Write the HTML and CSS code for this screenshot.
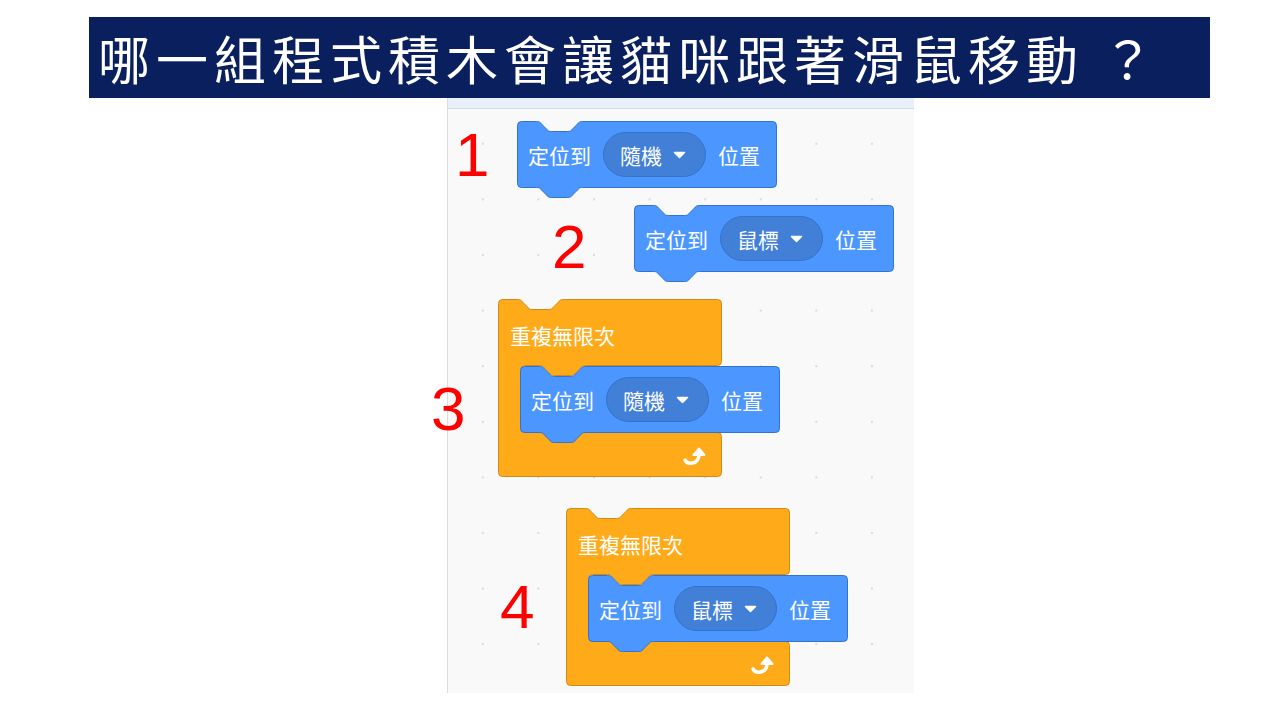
FILE: index.html
```html
<!DOCTYPE html>
<html lang="zh-Hant">

<head>
    <meta charset="UTF-8">
    <meta name="viewport" content="width=device-width, initial-scale=1.0">
    <title>哪一組程式積木會讓貓咪跟著滑鼠移動？</title>
    <link rel="stylesheet" href="styles.css">
</head>

<body>
    <header class="title">哪一組程式積木會讓貓咪跟著滑鼠移動 ？</header>

    <main class="workspace">
        <div class="tabs"></div>
        <div class="canvas">

            <!-- 1: go to random position -->
            <span class="num num-1">1</span>
            <div class="block motion pos-1">
                <svg class="shape" width="260" height="78" viewBox="0 0 260 78">
                    <path class="blue" d="M0.5,4.5 a4,4 0 0 1 4,-4 H19.5 c3,0 4,1 5,2.5 l5,5 c1,1.5 2,2.5 5,2.5 h16 c3,0 4,-1 5,-2.5 l5,-5 c1,-1.5 2,-2.5 5,-2.5 H255.5 a4,4 0 0 1 4,4 V62.5 a4,4 0 0 1 -4,4 H65.5 c-3,0 -4,1 -5,2.5 l-5,5 c-1,1.5 -2,2.5 -5,2.5 h-16 c-3,0 -4,-1 -5,-2.5 l-5,-5 c-1,-1.5 -2,-2.5 -5,-2.5 H4.5 a4,4 0 0 1 -4,-4 Z" />
                </svg>
                <div class="row">
                    <span>定位到</span>
                    <span class="dropdown">隨機
                        <svg class="caret" width="13" height="8" viewBox="0 0 13 8"><path d="M1.5,1.5 H11.5 L6.5,6.5 Z" /></svg>
                    </span>
                    <span>位置</span>
                </div>
            </div>

            <!-- 2: go to mouse pointer -->
            <span class="num num-2">2</span>
            <div class="block motion pos-2">
                <svg class="shape" width="260" height="78" viewBox="0 0 260 78">
                    <path class="blue" d="M0.5,4.5 a4,4 0 0 1 4,-4 H19.5 c3,0 4,1 5,2.5 l5,5 c1,1.5 2,2.5 5,2.5 h16 c3,0 4,-1 5,-2.5 l5,-5 c1,-1.5 2,-2.5 5,-2.5 H255.5 a4,4 0 0 1 4,4 V62.5 a4,4 0 0 1 -4,4 H65.5 c-3,0 -4,1 -5,2.5 l-5,5 c-1,1.5 -2,2.5 -5,2.5 h-16 c-3,0 -4,-1 -5,-2.5 l-5,-5 c-1,-1.5 -2,-2.5 -5,-2.5 H4.5 a4,4 0 0 1 -4,-4 Z" />
                </svg>
                <div class="row">
                    <span>定位到</span>
                    <span class="dropdown">鼠標
                        <svg class="caret" width="13" height="8" viewBox="0 0 13 8"><path d="M1.5,1.5 H11.5 L6.5,6.5 Z" /></svg>
                    </span>
                    <span>位置</span>
                </div>
            </div>

            <!-- 3: forever + random position -->
            <span class="num num-3">3</span>
            <div class="block forever pos-3">
                <svg class="shape" width="224" height="178" viewBox="0 0 224 178">
                    <path class="orange" d="M0.5,4.5 a4,4 0 0 1 4,-4 H19.5 c3,0 4,1 5,2.5 l5,5 c1,1.5 2,2.5 5,2.5 h16 c3,0 4,-1 5,-2.5 l5,-5 c1,-1.5 2,-2.5 5,-2.5 H219.5 a4,4 0 0 1 4,4 V62.5 a4,4 0 0 1 -4,4 H87.5 c-3,0 -4,1 -5,2.5 l-5,5 c-1,1.5 -2,2.5 -5,2.5 h-16 c-3,0 -4,-1 -5,-2.5 l-5,-5 c-1,-1.5 -2,-2.5 -5,-2.5 H26.5 a4,4 0 0 0 -4,4 V129.5 a4,4 0 0 0 4,4 H219.5 a4,4 0 0 1 4,4 V173.5 a4,4 0 0 1 -4,4 H4.5 a4,4 0 0 1 -4,-4 Z" />
                </svg>
                <div class="label">重複無限次</div>
                <svg class="loop" width="26" height="20" viewBox="0 0 26 20">
                    <path d="M3,14 C4,16.5 7,17.5 10.5,17 C15,16.3 17,13 17,8" />
                    <path class="head" d="M11.5,9 L17,2.5 L22.5,9 Z" />
                </svg>
                <div class="block motion inner">
                    <svg class="shape" width="260" height="78" viewBox="0 0 260 78">
                        <path class="blue" d="M0.5,4.5 a4,4 0 0 1 4,-4 H19.5 c3,0 4,1 5,2.5 l5,5 c1,1.5 2,2.5 5,2.5 h16 c3,0 4,-1 5,-2.5 l5,-5 c1,-1.5 2,-2.5 5,-2.5 H255.5 a4,4 0 0 1 4,4 V62.5 a4,4 0 0 1 -4,4 H65.5 c-3,0 -4,1 -5,2.5 l-5,5 c-1,1.5 -2,2.5 -5,2.5 h-16 c-3,0 -4,-1 -5,-2.5 l-5,-5 c-1,-1.5 -2,-2.5 -5,-2.5 H4.5 a4,4 0 0 1 -4,-4 Z" />
                    </svg>
                    <div class="row">
                        <span>定位到</span>
                        <span class="dropdown">隨機
                            <svg class="caret" width="13" height="8" viewBox="0 0 13 8"><path d="M1.5,1.5 H11.5 L6.5,6.5 Z" /></svg>
                        </span>
                        <span>位置</span>
                    </div>
                </div>
            </div>

            <!-- 4: forever + mouse pointer -->
            <span class="num num-4">4</span>
            <div class="block forever pos-4">
                <svg class="shape" width="224" height="178" viewBox="0 0 224 178">
                    <path class="orange" d="M0.5,4.5 a4,4 0 0 1 4,-4 H19.5 c3,0 4,1 5,2.5 l5,5 c1,1.5 2,2.5 5,2.5 h16 c3,0 4,-1 5,-2.5 l5,-5 c1,-1.5 2,-2.5 5,-2.5 H219.5 a4,4 0 0 1 4,4 V62.5 a4,4 0 0 1 -4,4 H87.5 c-3,0 -4,1 -5,2.5 l-5,5 c-1,1.5 -2,2.5 -5,2.5 h-16 c-3,0 -4,-1 -5,-2.5 l-5,-5 c-1,-1.5 -2,-2.5 -5,-2.5 H26.5 a4,4 0 0 0 -4,4 V129.5 a4,4 0 0 0 4,4 H219.5 a4,4 0 0 1 4,4 V173.5 a4,4 0 0 1 -4,4 H4.5 a4,4 0 0 1 -4,-4 Z" />
                </svg>
                <div class="label">重複無限次</div>
                <svg class="loop" width="26" height="20" viewBox="0 0 26 20">
                    <path d="M3,14 C4,16.5 7,17.5 10.5,17 C15,16.3 17,13 17,8" />
                    <path class="head" d="M11.5,9 L17,2.5 L22.5,9 Z" />
                </svg>
                <div class="block motion inner">
                    <svg class="shape" width="260" height="78" viewBox="0 0 260 78">
                        <path class="blue" d="M0.5,4.5 a4,4 0 0 1 4,-4 H19.5 c3,0 4,1 5,2.5 l5,5 c1,1.5 2,2.5 5,2.5 h16 c3,0 4,-1 5,-2.5 l5,-5 c1,-1.5 2,-2.5 5,-2.5 H255.5 a4,4 0 0 1 4,4 V62.5 a4,4 0 0 1 -4,4 H65.5 c-3,0 -4,1 -5,2.5 l-5,5 c-1,1.5 -2,2.5 -5,2.5 h-16 c-3,0 -4,-1 -5,-2.5 l-5,-5 c-1,-1.5 -2,-2.5 -5,-2.5 H4.5 a4,4 0 0 1 -4,-4 Z" />
                    </svg>
                    <div class="row">
                        <span>定位到</span>
                        <span class="dropdown">鼠標
                            <svg class="caret" width="13" height="8" viewBox="0 0 13 8"><path d="M1.5,1.5 H11.5 L6.5,6.5 Z" /></svg>
                        </span>
                        <span>位置</span>
                    </div>
                </div>
            </div>

        </div>
    </main>
</body>

</html>
```

FILE: styles.css
```css
body {
    margin: 0;
    width: 1280px;
    height: 720px;
    background: #fff;
    font-family: "Noto Sans CJK TC", "Noto Sans", sans-serif;
    overflow: hidden;
}

.title {
    margin: 17px 0 0 89px;
    width: 1121px;
    height: 81px;
    box-sizing: border-box;
    padding-left: 9px;
    background: #0a1f5e;
    color: #fff;
    font-size: 52px;
    letter-spacing: 6px;
    line-height: 81px;
    white-space: nowrap;
}

/* scratch code area */
.workspace {
    margin-left: 447px;
    width: 467px;
    height: 595px;
    border-left: 1px solid #dcdcdc;
    box-sizing: border-box;
    background: #f9f9f9;
    display: flex;
    flex-direction: column;
}

.tabs {
    height: 10px;
    background: #e8f0fb;
    border-bottom: 1px solid #cfdde6;
}

.canvas {
    position: relative;
    flex: 1;
    background-image: radial-gradient(circle, #dadada 1px, transparent 1.5px);
    background-size: 55.6px 55.6px;
    background-position: 7px 7px;
}

.num {
    position: absolute;
    color: #f00;
    font-family: "Liberation Sans", sans-serif;
    font-size: 62px;
    line-height: 62px;
}

.num-1 { left: 7px; top: 15px; }
.num-2 { left: 104px; top: 107px; }
.num-3 { left: -17px; top: 269px; }
.num-4 { left: 52px; top: 467px; }

.block {
    position: absolute;
    color: #fff;
}

.block .shape {
    position: absolute;
    left: 0;
    top: 0;
}

.blue {
    fill: #4c97ff;
    stroke: #3373cc;
}

.orange {
    fill: #ffab19;
    stroke: #cf8b17;
}

.motion {
    width: 260px;
    height: 67px;
}

.pos-1 { left: 69px; top: 12px; }
.pos-2 { left: 186px; top: 96px; }
.pos-3 { left: 50px; top: 190px; }
.pos-4 { left: 118px; top: 399px; }

.forever {
    width: 224px;
    height: 178px;
}

.forever .inner {
    left: 22px;
    top: 67px;
}

.row {
    position: relative;
    height: 67px;
    padding-left: 11px;
    display: flex;
    align-items: center;
    gap: 12px;
    font-size: 21px;
    white-space: nowrap;
}

.dropdown {
    width: 103px;
    height: 45px;
    box-sizing: border-box;
    padding-left: 16px;
    border: 1px solid #3373cc;
    border-radius: 23px;
    background: #4280d7;
    display: flex;
    align-items: center;
    gap: 11px;
}

.caret path {
    fill: #fff;
    stroke: #fff;
    stroke-width: 1.5;
    stroke-linejoin: round;
}

.label {
    position: relative;
    padding: 22px 0 0 12px;
    font-size: 21px;
    line-height: 28px;
    white-space: nowrap;
}

.loop {
    position: absolute;
    left: 184px;
    top: 147px;
}

.loop path {
    fill: none;
    stroke: #fff;
    stroke-width: 3.5;
    stroke-linecap: round;
}

.loop .head {
    fill: #fff;
    stroke-width: 2;
    stroke-linejoin: round;
}
```
